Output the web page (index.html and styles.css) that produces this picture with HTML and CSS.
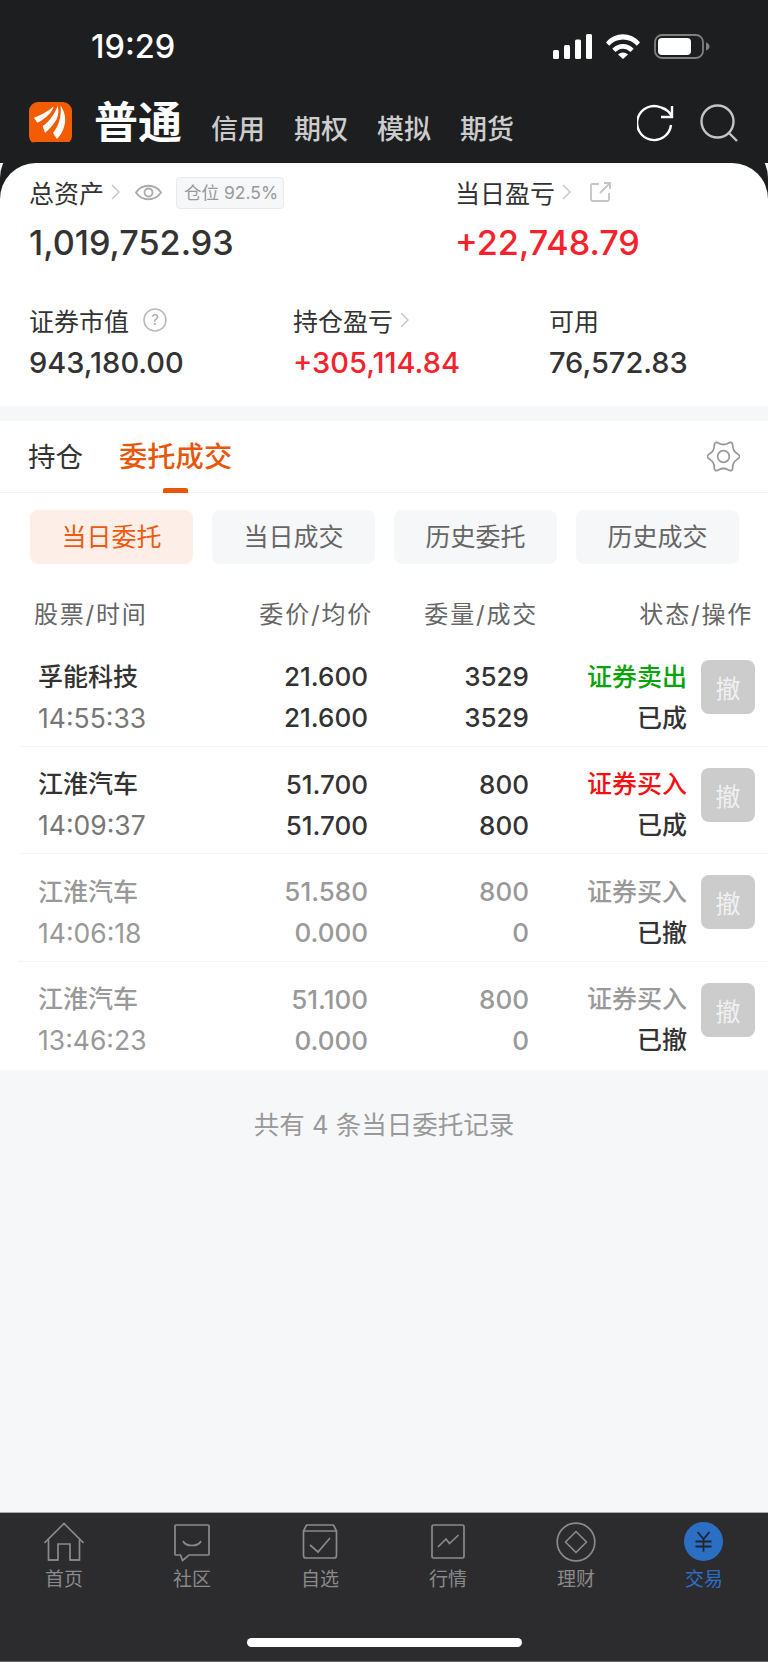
FILE: index.html
```html
<!DOCTYPE html>
<html lang="zh-CN">
<head>
  <meta charset="UTF-8">
  <meta name="viewport" content="width=device-width, initial-scale=1.0">
  <title>交易</title>
  <link rel="stylesheet" href="styles.css">
</head>
<body>
  <div class="app">
    <div class="status-bar">
      <span class="clock">19:29</span>
      <div class="status-icons">
        <svg width="39" height="25" viewBox="0 0 39 25" fill="#fff"><rect x="0" y="16" width="6" height="9" rx="1.5"/><rect x="11" y="11" width="6" height="14" rx="1.5"/><rect x="22" y="5.500" width="6" height="19.500" rx="1.5"/><rect x="33" y="0" width="6" height="25" rx="1.5"/></svg>
        <svg width="34" height="25" viewBox="0 0 34 25" fill="#fff"><path d="M0 8.500C9-2.400 25-2.400 34 8.500L30.800 11.800C23.500 3.500 10.500 3.500 3.200 11.800Z"/><path d="M6.300 14.800C12 8.500 22 8.500 27.700 14.800L24.500 18C20 13.500 14 13.500 9.500 18Z"/><path d="M12 20.500C15 17.800 19 17.800 22 20.500L17 25Z"/></svg>
        <svg width="56" height="25" viewBox="0 0 56 25"><rect x="1" y="1" width="48" height="23" rx="7" fill="none" stroke="#808080" stroke-width="1.800"/><rect x="4" y="4" width="33" height="17" rx="4" fill="#fff"/><path d="M52 8.500c2 .5 3.500 2 3.500 4s-1.500 3.500-3.500 4z" fill="#808080"/></svg>
      </div>
    </div>

    <div class="top-nav">
      <svg class="logo" width="43" height="43" viewBox="0 0 43 43">
        <rect width="43" height="43" rx="9" fill="#f25c05"/>
        <path d="M5 15.700C12 13 19 9.500 24.500 4.500C23.500 9 20 13 16.500 15.500C14 17.500 11 19.500 8.300 20.700Z" fill="#fff"/>
        <path d="M13.700 24C19.500 20.500 25 13 28.700 4C30.500 11 28.500 17 25.500 20.500C23 24 19.500 28 16 31Z" fill="#fff"/>
        <path d="M31.500 3.500C36 10 37.500 18 35 25C33.500 30 31 34 28 37L24 31C29 25 33 15 31.500 3.500Z" fill="#fff"/>
      </svg>
      <span class="nav-current">普通</span>
      <div class="nav-links">
        <span>信用</span>
        <span>期权</span>
        <span>模拟</span>
        <span>期货</span>
      </div>
      <div class="nav-tools">
        <svg width="38" height="38" viewBox="0 0 38 38" fill="none" stroke="#fff" stroke-width="2.400"><path d="M34 21A17 17 0 1 1 24 3.500"/><path d="M35 2V13H24"/><path d="M35 13C33 8 29 5 24 3.500"/></svg>
        <svg width="38" height="38" viewBox="0 0 38 38" fill="none" stroke="#c4c4c4" stroke-width="2.400"><circle cx="17.500" cy="17.500" r="16"/><path d="M29 29L37 37"/></svg>
      </div>
    </div>

    <div class="summary">
      <div class="summary-top">
        <div class="total">
          <div class="label-line">
            <span>总资产</span>
            <svg class="chev" width="9" height="16" viewBox="0 0 9 16"><path d="M1 1L8 8L1 15" fill="none" stroke="#c8c8c8" stroke-width="1.500"/></svg>
            <svg class="eye" width="27" height="17" viewBox="0 0 27 17" fill="none" stroke="#aaa" stroke-width="1.800"><path d="M1 8.500C7 -.500 20 -.500 26 8.500C20 17.500 7 17.500 1 8.500Z"/><circle cx="13.500" cy="8.500" r="4"/></svg>
            <span class="chip">仓位 92.5%</span>
          </div>
          <div class="big-num">1,019,752.93</div>
        </div>
        <div class="today">
          <div class="label-line">
            <span>当日盈亏</span>
            <svg class="chev" width="9" height="16" viewBox="0 0 9 16"><path d="M1 1L8 8L1 15" fill="none" stroke="#c8c8c8" stroke-width="1.500"/></svg>
            <svg class="share" width="21" height="20" viewBox="0 0 21 20" fill="none" stroke="#c4c4c4" stroke-width="1.800"><path d="M9 2H2.500A1.500 1.500 0 0 0 1 3.500V17.500A1.500 1.500 0 0 0 2.500 19H17.500A1.500 1.500 0 0 0 19 17.500V11"/><path d="M10 11L20 1M14 1H20V7"/></svg>
          </div>
          <div class="big-num up">+22,748.79</div>
        </div>
      </div>
      <div class="summary-bottom">
        <div class="cell cell-a">
          <div class="label-line">
            <span>证券市值</span>
            <svg class="help" width="24" height="24" viewBox="0 0 24 24"><circle cx="12" cy="12" r="11" fill="none" stroke="#bbb" stroke-width="1.600"/><text x="12" y="17" text-anchor="middle" class="help-mark">?</text></svg>
          </div>
          <div class="mid-num">943,180.00</div>
        </div>
        <div class="cell cell-b">
          <div class="label-line">
            <span>持仓盈亏</span>
            <svg class="chev" width="9" height="16" viewBox="0 0 9 16"><path d="M1 1L8 8L1 15" fill="none" stroke="#c8c8c8" stroke-width="1.500"/></svg>
          </div>
          <div class="mid-num up">+305,114.84</div>
        </div>
        <div class="cell">
          <div class="label-line"><span>可用</span></div>
          <div class="mid-num">76,572.83</div>
        </div>
      </div>
    </div>

    <div class="tabs">
      <span class="tab">持仓</span>
      <span class="tab active">委托成交</span>
      <svg class="gear" width="33" height="33" viewBox="0 0 34 34" fill="none" stroke="#999" stroke-width="1.800"><path d="M31.270 14.250Q36 17 31.270 19.750Q26.530 22.500 26.500 27.980Q26.500 33.450 21.750 30.730Q17 28 12.250 30.730Q7.500 33.450 7.490 27.980Q7.470 22.500 2.730 19.750Q-2 17 2.730 14.250Q7.470 11.500 7.490 6.030Q7.500 .55 12.250 3.280Q17 6 21.750 3.280Q26.500 .55 26.520 6.030Q26.530 11.500 31.270 14.250Z"/><circle cx="17" cy="17" r="6"/></svg>
    </div>

    <div class="list-area">
      <div class="sub-tabs">
        <span class="sub-tab active">当日委托</span>
        <span class="sub-tab">当日成交</span>
        <span class="sub-tab">历史委托</span>
        <span class="sub-tab">历史成交</span>
      </div>

      <div class="table-head">
        <span>股票/时间</span>
        <span>委价/均价</span>
        <span>委量/成交</span>
        <span>状态/操作</span>
      </div>

      <div class="order">
        <span class="name">孚能科技</span><span class="num">21.600</span><span class="num">3529</span><span class="side sell">证券卖出</span>
        <button class="cancel">撤</button>
        <span class="time">14:55:33</span><span class="num">21.600</span><span class="num">3529</span><span class="state">已成</span>
      </div>
      <div class="order">
        <span class="name">江淮汽车</span><span class="num">51.700</span><span class="num">800</span><span class="side buy">证券买入</span>
        <button class="cancel">撤</button>
        <span class="time">14:09:37</span><span class="num">51.700</span><span class="num">800</span><span class="state">已成</span>
      </div>
      <div class="order off">
        <span class="name">江淮汽车</span><span class="num">51.580</span><span class="num">800</span><span class="side">证券买入</span>
        <button class="cancel">撤</button>
        <span class="time">14:06:18</span><span class="num">0.000</span><span class="num">0</span><span class="state">已撤</span>
      </div>
      <div class="order off last">
        <span class="name">江淮汽车</span><span class="num">51.100</span><span class="num">800</span><span class="side">证券买入</span>
        <button class="cancel">撤</button>
        <span class="time">13:46:23</span><span class="num">0.000</span><span class="num">0</span><span class="state">已撤</span>
      </div>
    </div>

    <div class="list-foot">共有 4 条当日委托记录</div>

    <div class="bottom-bar">
      <div class="bar-items">
        <div class="bar-item">
          <svg width="40" height="40" viewBox="0 0 40 40" fill="none" stroke="#8a8a8c" stroke-width="1.700"><path d="M.5 21L20 1.500L39.500 21"/><path d="M4.500 17.500V38H14V22H26V38H35.500V17.500"/><path d="M14 38H4.500M26 38H35.500"/></svg>
          <span>首页</span>
        </div>
        <div class="bar-item">
          <svg width="40" height="40" viewBox="0 0 40 40" fill="none" stroke="#8a8a8c" stroke-width="1.700"><path d="M4 3H36A1 1 0 0 1 37 4V32A1 1 0 0 1 36 33H17L10.500 38.500L8.500 33H4A1 1 0 0 1 3 32V4A1 1 0 0 1 4 3Z"/><path d="M11 19C14 25 26 25 29 19"/></svg>
          <span>社区</span>
        </div>
        <div class="bar-item">
          <svg width="40" height="40" viewBox="0 0 40 40" fill="none" stroke="#8a8a8c" stroke-width="1.700"><path d="M6 36H34A2.500 2.500 0 0 0 36.500 33.500V9L33.500 3H6.500L3.500 9V33.500A2.500 2.500 0 0 0 6 36Z"/><path d="M3.500 9H36.500"/><path d="M10 23L18 30L30 16"/></svg>
          <span>自选</span>
        </div>
        <div class="bar-item">
          <svg width="40" height="40" viewBox="0 0 40 40" fill="none" stroke="#8a8a8c" stroke-width="1.700"><rect x="4" y="3" width="32" height="33" rx="1.500"/><path d="M10 25L18 17L21.500 21.500L30.500 13"/></svg>
          <span>行情</span>
        </div>
        <div class="bar-item">
          <svg width="40" height="40" viewBox="0 0 40 40" fill="none" stroke="#8a8a8c" stroke-width="1.700" stroke-linejoin="round"><circle cx="20" cy="20" r="18.800"/><path d="M20 9.500L30.500 20L20 30.500L9.500 20Z"/></svg>
          <span>理财</span>
        </div>
        <div class="bar-item current">
          <svg width="40" height="40" viewBox="0 0 40 40"><circle cx="19.500" cy="19.500" r="19.500" fill="#2a6fc4"/><path d="M13.500 10L19.500 17L25.500 10M11.500 19.500H27.500M11.500 24.500H27.500M19.500 17V29.500" fill="none" stroke="#22252b" stroke-width="1.800"/></svg>
          <span>交易</span>
        </div>
      </div>
      <div class="home-line"></div>
    </div>
  </div>
</body>
</html>
```

FILE: styles.css
```css
*{
  margin: 0;
  padding: 0;
  box-sizing: border-box;
}
html,body{
  width: 768px;
  height: 1662px;
  overflow: hidden;
}
body{
  font-family: "Inter", "Noto Sans CJK SC", sans-serif;
  color: #333;
  background-color: #f6f7f9;
}
svg{
  display: block;
  flex-shrink: 0;
}
.app{
  display: flex;
  flex-direction: column;
  height: 1662px;
}

.status-bar{
  display: flex;
  justify-content: space-between;
  align-items: center;
  height: 92px;
  padding: 0 58px 0 91px;
  background-color: #1d1e20;
}
.clock{
  font-size: 32.500px;
  font-weight: 500;
  color: #fff;
}
.status-icons{
  display: flex;
  align-items: center;
  gap: 14px;
}

.top-nav{
  display: flex;
  align-items: center;
  height: 71px;
  padding: 0 30px 9px 29px;
  background-color: #1d1e20;
}
.logo{
  margin-right: 22px;
}
.nav-current{
  font-size: 44px;
  font-weight: 700;
  color: #fff;
  line-height: 50px;
}
.nav-links{
  display: flex;
  gap: 29px;
  margin: 8px 0 0 29px;
  font-size: 27px;
  font-weight: 500;
  color: #ccc;
}
.nav-tools{
  display: flex;
  gap: 25px;
  margin-left: auto;
}

.summary{
  height: 243px;
  padding: 11px 30px 0 29px;
  background-color: #fff;
  border-radius: 36px 36px 0 0;
  box-shadow: 0 -21px 0 0 #1d1e20;
}
.summary-top{
  display: flex;
}
.total{
  width: 426px;
}
.label-line{
  display: flex;
  align-items: center;
  height: 36px;
  font-size: 25px;
  color: #333;
}
.chev{
  margin-left: 7px;
}
.eye{
  margin-left: 15px;
}
.chip{
  margin: 2px 0 0 14px;
  height: 32px;
  line-height: 30px;
  padding: 0 5px 0 7px;
  font-size: 17.500px;
  color: #999;
  background-color: #f6f7f9;
  border: 1px solid #e9e9e9;
  border-radius: 4px;
}
.share{
  margin-left: 19px;
}
.help{
  margin-left: 14px;
}
.help-mark{
  font-size: 15px;
  fill: #aaa;
}
.big-num{
  margin-top: 11px;
  height: 44px;
  line-height: 44px;
  font-size: 34.200px;
  font-weight: 500;
  color: #333;
}
.up{
  color: #f5222d;
}
.today .big-num{
  color: #f5222d;
}
.summary-bottom{
  display: flex;
  margin-top: 37px;
}
.cell-a{
  width: 264px;
}
.cell-b{
  width: 256px;
}
.mid-num{
  margin-top: 7px;
  height: 36px;
  line-height: 36px;
  font-size: 29px;
  font-weight: 500;
  color: #333;
}
.mid-num.up{
  color: #f5222d;
}

.tabs{
  display: flex;
  align-items: center;
  gap: 36px;
  height: 72px;
  margin-top: 15px;
  padding: 0 28px;
  background-color: #fff;
  border-bottom: 1px solid #f2f2f2;
}
.tab{
  position: relative;
  font-size: 27.500px;
  line-height: 72px;
  color: #333;
}
.tab.active{
  font-size: 28.300px;
  font-weight: 500;
  color: #e8560a;
}
.tab.active::after{
  content: "";
  position: absolute;
  left: 44px;
  bottom: 0;
  width: 25px;
  height: 5px;
  border-radius: 2px 2px 0 0;
  background-color: #e8560a;
}
.gear{
  margin-left: auto;
}

.list-area{
  padding-top: 17px;
  background-color: #fff;
  height: 577px;
}
.sub-tabs{
  display: flex;
  gap: 19px;
  padding-left: 30px;
}
.sub-tab{
  width: 163px;
  height: 54px;
  line-height: 54px;
  text-align: center;
  font-size: 25px;
  color: #666;
  background-color: #f6f7f9;
  border-radius: 8px;
}
.sub-tab.active{
  color: #ee5a10;
  background-color: #fdefe7;
}
.table-head{
  display: grid;
  grid-template-columns: 225px 114px 165px 215px;
  align-items: center;
  height: 75px;
  padding: 22px 0 0 34px;
  font-size: 24px;
  letter-spacing: 1.800px;
  color: #666;
}
.table-head span{
  text-align: right;
}
.table-head span:first-child{
  text-align: left;
}

.order{
  display: grid;
  grid-template-columns: 182px 148px 161px 158px 53px;
  grid-template-rows: 41px 41px;
  align-items: center;
  height: 107.500px;
  margin-left: 18px;
  padding: 17px 0 0 20px;
  border-bottom: 1px solid #f4f4f4;
  font-size: 26px;
}
.order.last{
  border-bottom: 0;
}
.name{
  margin-bottom: 4px;
  font-size: 25px;
  font-weight: 500;
  color: #333;
}
.time{
  font-size: 26.500px;
  color: #777;
}
.num{
  text-align: right;
  font-weight: 500;
  color: #333;
}
.side,.state{
  margin-bottom: 4px;
  text-align: right;
  font-size: 25px;
  font-weight: 500;
}
.state{
  color: #333;
}
.sell{
  color: #07a307;
}
.buy{
  color: #f50f0f;
}
.cancel{
  grid-column: 5;
  grid-row: 1 / 3;
  align-self: start;
  justify-self: end;
  width: 54px;
  height: 54px;
  margin: 4px -15px 0 0;
  border: 0;
  border-radius: 8px;
  background-color: #ccc;
  color: #f0f0f0;
  font-family: inherit;
  font-size: 25px;
}
.order .side{
  grid-column: 4;
}
.order.off .name,.order.off .time,.order.off .num,.order.off .side{
  color: #999;
}

.list-foot{
  flex: 1;
  padding-top: 36px;
  text-align: center;
  font-size: 25.500px;
  line-height: 38px;
  color: #999;
}

.bottom-bar{
  height: 150px;
  padding-top: 9px;
  background-color: #2c2c2e;
  border-top: 1px solid #aaa;
  border-bottom: 1px solid #666;
}
.bar-items{
  display: flex;
}
.bar-item{
  display: flex;
  flex-direction: column;
  align-items: center;
  width: 128px;
  font-size: 19px;
  line-height: 26px;
  color: #8a8a8c;
}
.bar-item span{
  margin-top: 5px;
}
.bar-item.current{
  color: #2a6fc4;
}
.home-line{
  width: 275px;
  height: 9px;
  margin: 45px 0 0 247px;
  border-radius: 5px;
  background-color: #fff;
}
```
